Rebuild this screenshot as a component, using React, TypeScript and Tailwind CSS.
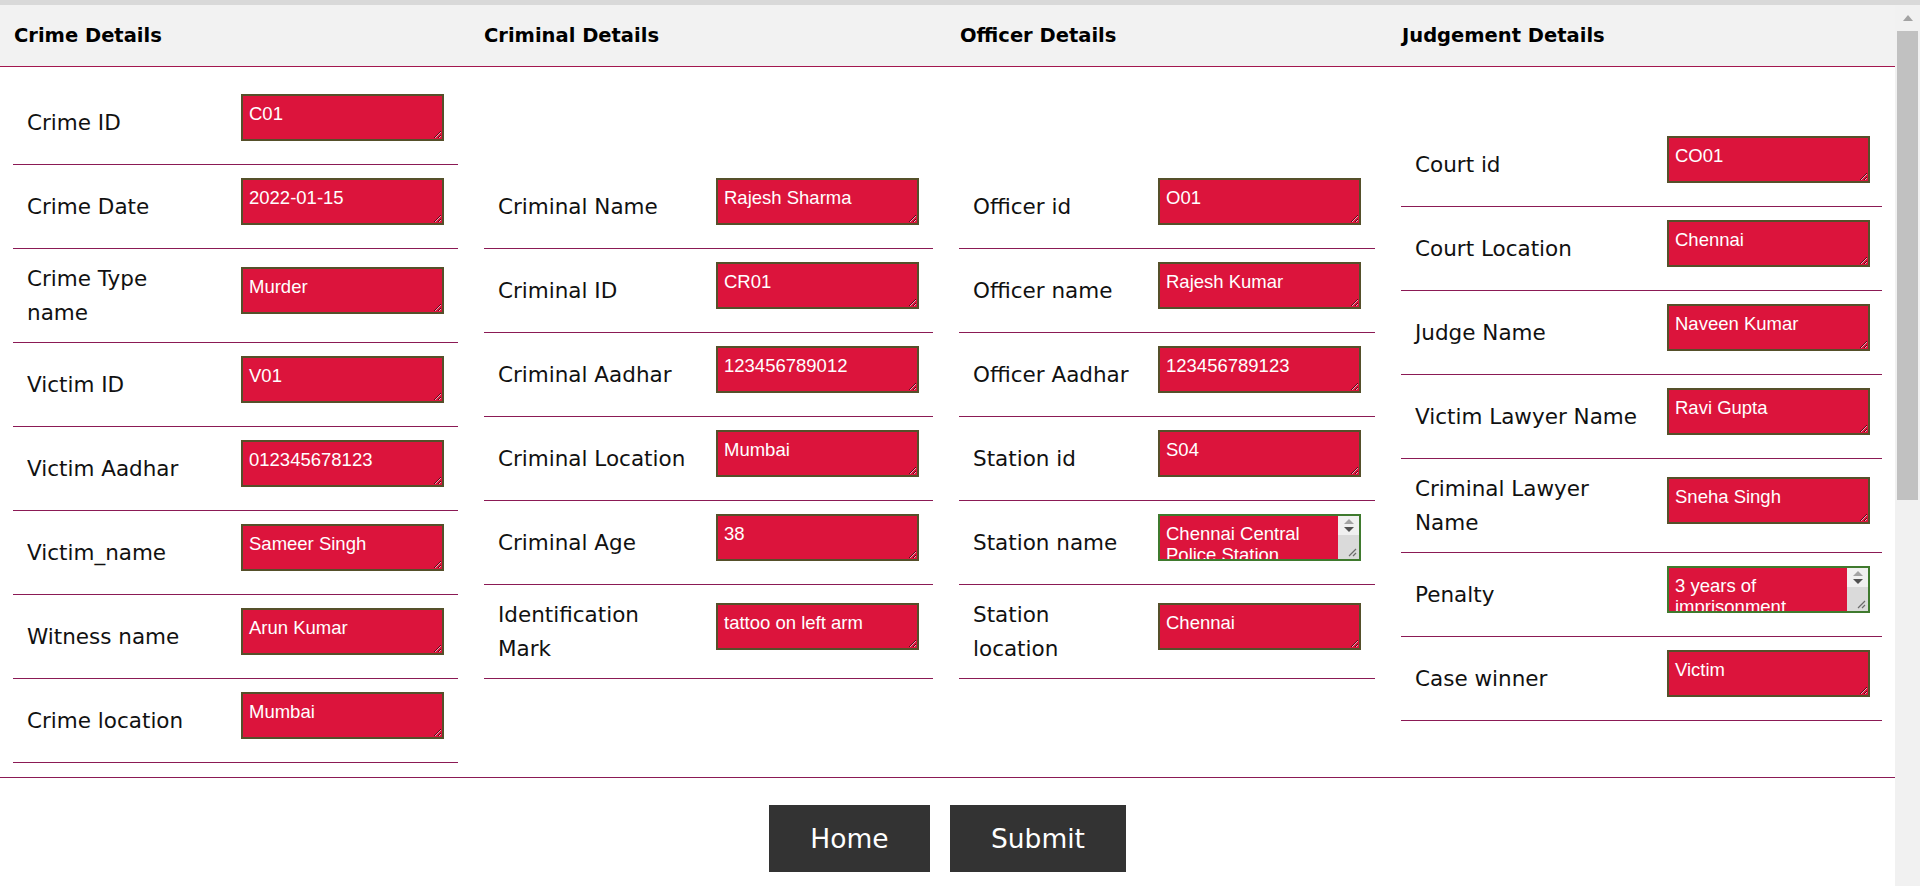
import React from 'react';

type Field = { label: string; value: string; overflow?: boolean };

const crimeFields: Field[] = [
  { label: 'Crime ID', value: 'C01' },
  { label: 'Crime Date', value: '2022-01-15' },
  { label: 'Crime Type\nname', value: 'Murder' },
  { label: 'Victim ID', value: 'V01' },
  { label: 'Victim Aadhar', value: '012345678123' },
  { label: 'Victim_name', value: 'Sameer Singh' },
  { label: 'Witness name', value: 'Arun Kumar' },
  { label: 'Crime location', value: 'Mumbai' },
];

const criminalFields: Field[] = [
  { label: 'Criminal Name', value: 'Rajesh Sharma' },
  { label: 'Criminal ID', value: 'CR01' },
  { label: 'Criminal Aadhar', value: '123456789012' },
  { label: 'Criminal Location', value: 'Mumbai' },
  { label: 'Criminal Age', value: '38' },
  { label: 'Identification\nMark', value: 'tattoo on left arm' },
];

const officerFields: Field[] = [
  { label: 'Officer id', value: 'O01' },
  { label: 'Officer name', value: 'Rajesh Kumar' },
  { label: 'Officer Aadhar', value: '123456789123' },
  { label: 'Station id', value: 'S04' },
  { label: 'Station name', value: 'Chennai Central Police Station', overflow: true },
  { label: 'Station\nlocation', value: 'Chennai' },
];

const judgementFields: Field[] = [
  { label: 'Court id', value: 'CO01' },
  { label: 'Court Location', value: 'Chennai' },
  { label: 'Judge Name', value: 'Naveen Kumar' },
  { label: 'Victim Lawyer Name', value: 'Ravi Gupta' },
  { label: 'Criminal Lawyer\nName', value: 'Sneha Singh' },
  { label: 'Penalty', value: '3 years of imprisonment', overflow: true },
  { label: 'Case winner', value: 'Victim' },
];

const MiniScrollbar: React.FC = () => (
  <div className="pointer-events-none absolute top-[2px] right-[2px] bottom-[2px] flex w-[21px] flex-col">
    <div className="flex h-[19px] flex-col items-center justify-center gap-[3px] bg-[#f0f0f0]">
      <svg width="10" height="5" viewBox="0 0 10 5">
        <path d="M5 0 L10 5 L0 5 Z" fill="#a3a3a3" />
      </svg>
      <svg width="10" height="5" viewBox="0 0 10 5">
        <path d="M0 0 L10 0 L5 5 Z" fill="#505050" />
      </svg>
    </div>
    <div className="flex flex-1 items-end justify-end bg-[#dadada] pr-[2px] pb-[2px]">
      <svg width="10" height="10" viewBox="0 0 10 10">
        <path d="M9 2 L2 9 M9 6 L6 9" stroke="#6b6b6b" strokeWidth="1.2" />
      </svg>
    </div>
  </div>
);

const FieldRow: React.FC<{ field: Field; labelWidth: string }> = ({ field, labelWidth }) => (
  <div className="flex items-center border-b border-[#8b1a55] py-[13px]">
    <div
      className={`${labelWidth} shrink-0 whitespace-pre-line pl-[14px] pr-[13px] text-[21.5px] leading-[33.5px] text-[#111111]`}
    >
      {field.label}
    </div>
    <div className="h-[57px] px-[13px]">
      <div className="relative h-[47px] w-[203px]">
        <textarea
          defaultValue={field.value}
          className={`block h-[47px] w-[203px] resize overflow-hidden border-2 bg-[#dc143c] pt-[7px] pl-[6px] font-['Liberation_Sans',Arial,sans-serif] text-[18.5px] leading-[21px] text-white outline-none ${
            field.overflow ? 'border-[#3f7a2e] pr-[25px]' : 'border-[#55502a] pr-[8px]'
          }`}
        />
        {field.overflow && <MiniScrollbar />}
      </div>
    </div>
  </div>
);

const Column: React.FC<{ fields: Field[]; width: string; labelWidth: string }> = ({ fields, width, labelWidth }) => (
  <div className={`${width} flex shrink-0 items-center px-[13px]`}>
    <div className="w-full">
      {fields.map((f) => (
        <FieldRow key={f.label} field={f} labelWidth={labelWidth} />
      ))}
    </div>
  </div>
);

const App: React.FC = () => {
  return (
    <div className="h-screen w-full overflow-hidden bg-white font-['DejaVu_Sans',sans-serif]">
      <div className="h-[5px] bg-[#d9d9d9]" />
      <div className="flex">
        <div className="w-[1895px] shrink-0">
          {/* Section headings */}
          <div className="flex h-[62px] items-center border-b border-[#a3174f] bg-[#f2f2f2] text-[19.5px] font-bold text-black">
            <div className="w-[471px] shrink-0 pl-[14px]">Crime Details</div>
            <div className="w-[475px] shrink-0 pl-[13px]">Criminal Details</div>
            <div className="w-[442px] shrink-0 pl-[14px]">Officer Details</div>
            <div className="w-[507px] shrink-0 pl-[14px]">Judgement Details</div>
          </div>

          {/* Form columns */}
          <div className="flex border-b border-[#8b1a55] py-[14px]">
            <Column fields={crimeFields} width="w-[471px]" labelWidth="w-[215px]" />
            <Column fields={criminalFields} width="w-[475px]" labelWidth="w-[219px]" />
            <Column fields={officerFields} width="w-[442px]" labelWidth="w-[186px]" />
            <Column fields={judgementFields} width="w-[507px]" labelWidth="w-[253px]" />
          </div>

          {/* Actions */}
          <div className="flex justify-center gap-[20px] pt-[27px]">
            <button className="h-[67px] w-[161px] bg-[#333333] text-[26.5px] text-white">Home</button>
            <button className="h-[67px] w-[176px] bg-[#333333] text-[26.5px] text-white">Submit</button>
          </div>
        </div>

        {/* Page scrollbar */}
        <div className="flex h-[881px] w-[25px] shrink-0 flex-col bg-[#f1f1f1]">
          <div className="flex h-[26px] items-center justify-center">
            <svg width="10" height="6" viewBox="0 0 10 6">
              <path d="M5 0 L10 6 L0 6 Z" fill="#a3a3a3" />
            </svg>
          </div>
          <div className="mx-auto h-[469px] w-[21px] bg-[#c1c1c1]" />
        </div>
      </div>
    </div>
  );
};

export default App;
